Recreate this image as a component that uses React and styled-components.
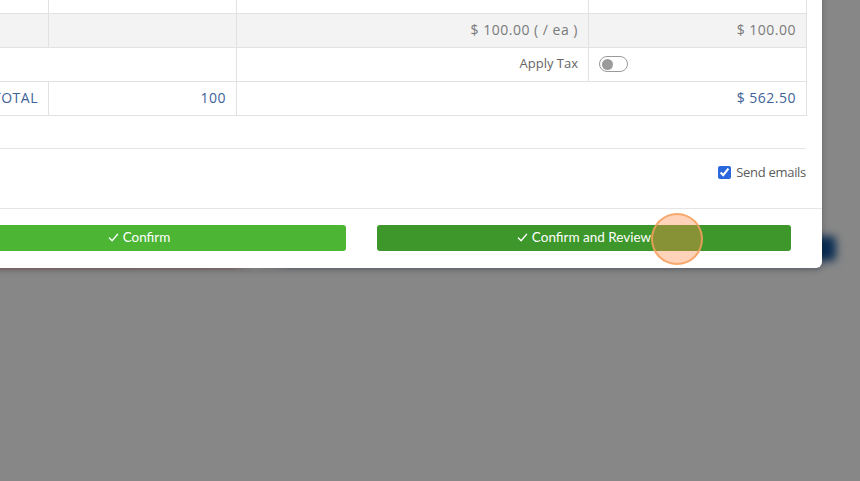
import React from "react";
import styled, { createGlobalStyle } from "styled-components";

const Global = createGlobalStyle`
  html, body { margin: 0; padding: 0; }
  body { font-family: "Open Sans", "Liberation Sans", sans-serif; background: #878787; }
`;

const Page = styled.div`
  position: relative;
  width: 860px;
  height: 481px;
  overflow: hidden;
  background: #878787;
`;

const BackdropButton = styled.div`
  position: absolute;
  left: 800px;
  top: 236px;
  width: 36px;
  height: 25px;
  border-radius: 5px;
  background: #0a2c52;
  filter: blur(4px);
`;

const BackdropStrip = styled.div`
  position: absolute;
  left: 0;
  top: 266px;
  width: 820px;
  height: 4px;
  background: linear-gradient(90deg, #8f7777 0%, #8d7a7a 28%, #9a9a9a 31%, #7c7f88 36%, #7c7f88 100%);
  filter: blur(1px);
`;

const Modal = styled.div`
  position: relative;
  margin-left: -99px;
  margin-top: -36px;
  width: 921px;
  background: #fff;
  border-radius: 0 0 6px 0;
  box-shadow: 0 2px 6px rgba(0, 0, 0, 0.25);
`;

const Body = styled.div`
  padding: 15px 16px 0 16px;
`;

const Table = styled.table`
  width: 100%;
  border-collapse: collapse;
  table-layout: fixed;
  font-size: 13px;
  color: #777;
`;

const Row = styled.tr`
  background: ${(p) => (p.$shaded ? "#f3f3f3" : "#fff")};
`;

const Cell = styled.td`
  box-sizing: border-box;
  height: 34px;
  padding: 0 10px 3px 10px;
  border: 1px solid #e2e2e2;
  text-align: ${(p) => p.$align || "right"};
  color: ${(p) => (p.$blue ? "#3d6399" : p.$dark ? "#666" : "#7a7a7a")};
  font-size: ${(p) => (p.$num ? "14px" : "13px")};
  letter-spacing: ${(p) => (p.$num ? "0.5px" : "0")};
  vertical-align: middle;
  white-space: nowrap;
`;

const Toggle = styled.span`
  display: inline-flex;
  align-items: center;
  box-sizing: border-box;
  width: 29px;
  height: 16px;
  border: 1px solid #9a9a9a;
  border-radius: 8px;
  padding: 0 2px;
  vertical-align: middle;
`;

const Knob = styled.span`
  width: 11px;
  height: 11px;
  border-radius: 50%;
  background: #9b9b9b;
`;

const Divider = styled.hr`
  margin: 32px 0 0 0;
  border: 0;
  border-top: 1px solid #e5e5e5;
`;

const OptionsRow = styled.div`
  display: flex;
  justify-content: flex-end;
  align-items: flex-start;
  box-sizing: border-box;
  height: 59px;
  padding-top: 14px;
`;

const CheckLabel = styled.label`
  display: flex;
  align-items: center;
  gap: 5px;
  font-size: 13px;
  letter-spacing: -0.3px;
  color: #5c5c5c;
`;

const Check = styled.input`
  width: 13px;
  height: 13px;
  margin: 0;
  accent-color: #2a67dd;
`;

const Footer = styled.div`
  border-top: 1px solid #e5e5e5;
  padding: 16px 31px 17px 31px;
  display: grid;
  grid-template-columns: 1fr 1fr;
  column-gap: 31px;
`;

const Button = styled.button`
  height: 26px;
  border: 0;
  border-radius: 3px;
  background: ${(p) => (p.$dark ? "#3d972a" : "#4cb534")};
  color: #fff;
  font-family: "Lato", "Open Sans", sans-serif;
  font-size: 13.5px;
  display: flex;
  align-items: center;
  justify-content: center;
  gap: 4px;
  padding: 0 0 2px 0;
  cursor: pointer;
`;

const Highlight = styled.div`
  position: absolute;
  left: 651px;
  top: 213px;
  width: 52px;
  height: 52px;
  box-sizing: border-box;
  border-radius: 50%;
  background: rgba(255, 140, 70, 0.38);
  border: 2px solid rgba(245, 160, 95, 0.85);
  pointer-events: none;
`;

const CheckIcon = () => (
  <svg width="11" height="11" viewBox="0 0 12 12" fill="none">
    <path d="M1.5 6.5 L4.5 9.5 L10.5 2.5" stroke="#fff" strokeWidth="1.4" strokeLinecap="round" strokeLinejoin="round" />
  </svg>
);

export default function App() {
  return (
    <>
      <Global />
      <Page>
        <BackdropButton />
        <BackdropStrip />
        <Modal>
          <Body>
            <Table>
              <colgroup>
                <col style={{ width: "131px" }} />
                <col style={{ width: "188px" }} />
                <col style={{ width: "352px" }} />
                <col style={{ width: "218px" }} />
              </colgroup>
              <tbody>
                <Row>
                  <Cell />
                  <Cell />
                  <Cell />
                  <Cell />
                </Row>
                <Row $shaded>
                  <Cell />
                  <Cell />
                  <Cell $num>$ 100.00 ( / ea )</Cell>
                  <Cell $num>$ 100.00</Cell>
                </Row>
                <Row>
                  <Cell colSpan={2} />
                  <Cell $dark>Apply Tax</Cell>
                  <Cell $align="left">
                    <Toggle>
                      <Knob />
                    </Toggle>
                  </Cell>
                </Row>
                <Row>
                  <Cell $blue $num>TOTAL</Cell>
                  <Cell $blue $num>100</Cell>
                  <Cell $blue $num colSpan={2}>$ 562.50</Cell>
                </Row>
              </tbody>
            </Table>
            <Divider />
            <OptionsRow>
              <CheckLabel>
                <Check type="checkbox" defaultChecked />
                Send emails
              </CheckLabel>
            </OptionsRow>
          </Body>
          <Footer>
            <Button>
              <CheckIcon />
              Confirm
            </Button>
            <Button $dark>
              <CheckIcon />
              Confirm and Review
            </Button>
          </Footer>
        </Modal>
        <Highlight />
      </Page>
    </>
  );
}
